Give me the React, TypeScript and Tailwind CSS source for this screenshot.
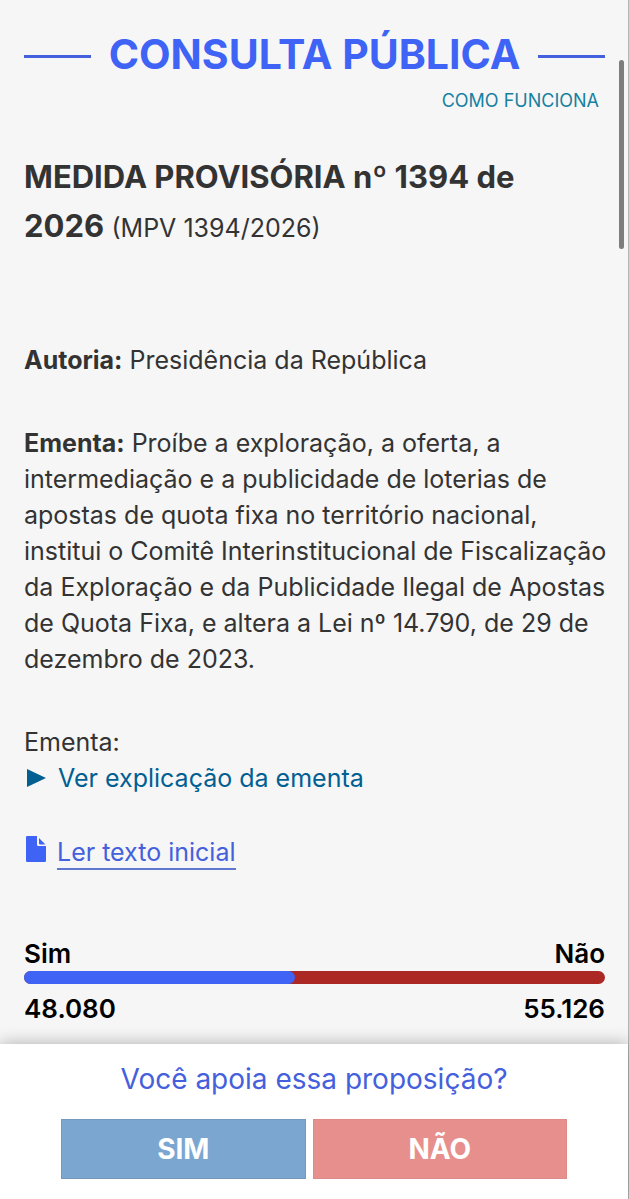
const votes = { yes: 48080, no: 55126 };

const format = (value: number) => value.toLocaleString("de-DE");

function FileIcon() {
  return (
    <svg viewBox="0 0 20 26" className="h-[26px] w-5 shrink-0" fill="currentColor" aria-hidden="true">
      <path d="M0 1.2Q0 0 1.2 0H11V8.8Q11 10 12.2 10H20V24.8Q20 26 18.8 26H1.2Q0 26 0 24.8Z" />
      <path d="M13 2L19.4 8.4H13.8Q13 8.4 13 7.6Z" />
    </svg>
  );
}

function VoteBar() {
  const share = (votes.yes / (votes.yes + votes.no)) * 100;
  return (
    <section className="mt-[67px] text-[26px] font-semibold leading-[34px] text-black">
      <div className="flex justify-between">
        <span>Sim</span>
        <span>Não</span>
      </div>
      <div className="h-[13px] overflow-hidden rounded-full bg-[#ab2824]">
        <div className="h-full rounded-r-full bg-[#3e63f5]" style={{ width: `${share}%` }} />
      </div>
      <div className="mt-2 flex justify-between">
        <span>{format(votes.yes)}</span>
        <span>{format(votes.no)}</span>
      </div>
    </section>
  );
}

export default function App() {
  return (
    <div className="relative flex min-h-screen flex-col border-r border-[#b5b5b5] bg-[#f6f6f6] font-['Inter',sans-serif] text-[#333]">
      <div className="absolute top-[60px] right-1 h-[189px] w-[5px] rounded-full bg-[#7d7d7d]" />

      <main className="pr-[23px] pl-6 pt-[29px] pb-[18px]">
        <h1 className="flex items-center gap-[18px] text-[41px] font-bold leading-[50px] text-[#3e63f5]">
          <span className="mt-1 h-[3px] flex-1 bg-[#4560dc]" />
          CONSULTA PÚBLICA
          <span className="mt-1 h-[3px] flex-1 bg-[#4560dc]" />
        </h1>
        <div className="flex justify-end pr-1.5">
          <a href="#como-funciona" className="mt-2.5 text-[18px] leading-6 text-[#1681a0]">
            COMO FUNCIONA
          </a>
        </div>

        <h2 className="mt-[39px] pr-6 text-[31px] font-bold leading-[49px]">
          MEDIDA PROVISÓRIA nº 1394 de 2026{" "}
          <span className="text-[25px] font-normal">(MPV 1394/2026)</span>
        </h2>

        <div className="text-[25px] leading-9">
          <p className="mt-[89px]">
            <strong>Autoria:</strong> Presidência da República
          </p>
          <p className="-mr-3 mt-[47px]">
            <strong>Ementa:</strong> Proíbe a exploração, a oferta, a intermediação e a publicidade
            de loterias de apostas de quota fixa no território nacional, institui o Comitê
            Interinstitucional de Fiscalização da Exploração e da Publicidade Ilegal de Apostas de
            Quota Fixa, e altera a Lei nº 14.790, de 29 de dezembro de 2023.
          </p>
          <p className="mt-[47px]">Ementa:</p>
          <button type="button" className="flex items-center gap-3 pl-[3px] text-[#015f92]">
            <svg viewBox="0 0 19 18" className="h-[18px] w-[19px] shrink-0" fill="currentColor" aria-hidden="true">
              <path d="M0 0L19 9L0 18Z" />
            </svg>
            Ver explicação da ementa
          </button>
          <a
            href="#texto-inicial"
            className="mt-10 flex items-start gap-[11px] pl-0.5 leading-8 text-[#4560dc]"
          >
            <span className="text-[#3e63f5]">
              <FileIcon />
            </span>
            <span className="border-b-2 border-[#5f77cf]">Ler texto inicial</span>
          </a>
        </div>

        <VoteBar />
      </main>

      <footer className="sticky bottom-0 mt-auto bg-white px-[61px] pt-[15px] pb-5 shadow-[0_0_16px_rgba(0,0,0,0.3)]">
        <p className="text-center text-[28px] leading-10 text-[#4560dc]">
          Você apoia essa proposição?
        </p>
        <div className="mt-5 flex gap-[7px] text-[28px] font-bold text-white">
          <button type="button" className="h-[60px] flex-[49] border border-[#7599bd] bg-[#7aa6d0]">
            SIM
          </button>
          <button type="button" className="h-[60px] flex-[51] border border-[#dd8a88] bg-[#e78f8c]">
            NÃO
          </button>
        </div>
      </footer>
    </div>
  );
}
